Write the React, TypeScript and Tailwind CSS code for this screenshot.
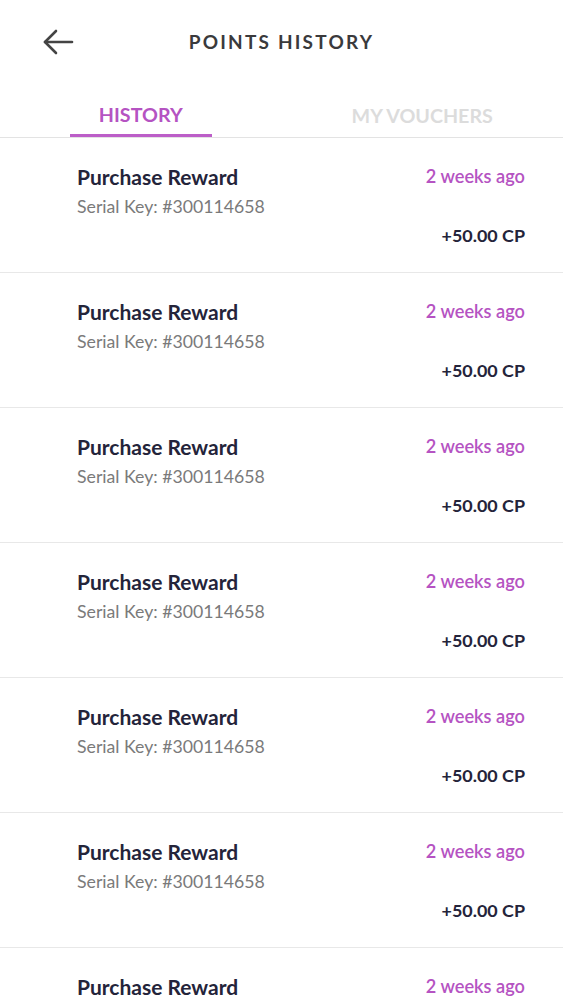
import React from "react";

const rows = Array.from({ length: 7 });

export default function App() {
  return (
    <div className="w-[563px] h-[1000px] overflow-hidden bg-white" style={{ fontFamily: "Lato, 'Noto Sans', sans-serif" }}>
      <div className="relative h-[85px] flex items-center justify-center">
        <button className="absolute left-[40px] top-[27px] w-[36px] h-[30px] flex items-center justify-center text-[#444]">
          <svg width="32" height="28" viewBox="0 0 32 28" fill="none" stroke="currentColor" strokeWidth="2.6" strokeLinecap="round" strokeLinejoin="round">
            <path d="M30 14H3" />
            <path d="M14 3L3 14l11 11" />
          </svg>
        </button>
        <h1 className="text-[19px] font-bold tracking-[2.2px] text-[#3a3a3c]">POINTS HISTORY</h1>
      </div>
      <div className="flex border-b border-[#e3e3e3]">
        <div className="flex-1 flex justify-center">
          <div className="w-[142px] h-[52px] flex items-center justify-center border-b-[3px] border-[#bc5ec8] mb-[-1px]">
            <span className="text-[19.7px] font-bold text-[#b553c2] pt-[10px]">HISTORY</span>
          </div>
        </div>
        <div className="flex-1 flex justify-center">
          <div className="h-[52px] flex items-center justify-center">
            <span className="text-[19.7px] font-bold text-[#dcdcdc] pt-[10px]">MY VOUCHERS</span>
          </div>
        </div>
      </div>
      {rows.map((_, i) => (
        <div key={i} className="h-[135px] border-b border-[#e8e8e8] pl-[77px] pr-[38px] pt-[27px]">
          <div className="flex justify-between items-center h-[24px]">
            <span className="text-[21px] font-bold text-[#24243a]">Purchase Reward</span>
            <span className="text-[18.2px] font-semibold text-[#b553c2]">2 weeks ago</span>
          </div>
          <div className="mt-[6px] h-[24px] flex items-center text-[17.7px] text-[#7a7a7a]">Serial Key: #300114658</div>
          <div className="mt-[4px] h-[24px] flex items-center justify-end text-[17.9px] font-bold text-[#24243a]">+50.00 CP</div>
        </div>
      ))}
    </div>
  );
}
